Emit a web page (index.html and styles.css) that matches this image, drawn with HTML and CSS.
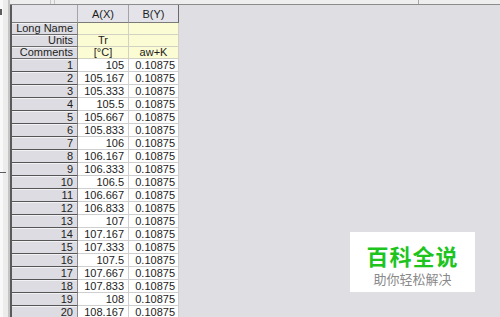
FILE: index.html
```html
<!DOCTYPE html>
<html lang="zh">
<head>
<meta charset="utf-8">
<title>Worksheet</title>
<link rel="stylesheet" href="styles.css">
</head>
<body>
<div class="app">
  <div class="side"><i class="mark m1"></i><i class="mark m2"></i></div>
  <div class="content">
    <div class="topbar"><span class="seg s1"></span><span class="seg s2"></span><span class="seg s3"></span></div>
    <div class="sheet">
      <div class="grid">
        <div class="hd corner"></div><div class="hd">A(X)</div><div class="hd last">B(Y)</div>
        <div class="rh lbl">Long Name</div><div class="yc"></div><div class="yc"></div>
        <div class="rh lbl">Units</div><div class="yc ctr">Tr</div><div class="yc"></div>
        <div class="rh lbl">Comments</div><div class="yc ctr">[°C]</div><div class="yc ctr">aw+K</div>
        <div class="rh">1</div><div class="dc">105</div><div class="dc">0.10875</div>
        <div class="rh">2</div><div class="dc">105.167</div><div class="dc">0.10875</div>
        <div class="rh">3</div><div class="dc">105.333</div><div class="dc">0.10875</div>
        <div class="rh">4</div><div class="dc">105.5</div><div class="dc">0.10875</div>
        <div class="rh">5</div><div class="dc">105.667</div><div class="dc">0.10875</div>
        <div class="rh">6</div><div class="dc">105.833</div><div class="dc">0.10875</div>
        <div class="rh">7</div><div class="dc">106</div><div class="dc">0.10875</div>
        <div class="rh">8</div><div class="dc">106.167</div><div class="dc">0.10875</div>
        <div class="rh">9</div><div class="dc">106.333</div><div class="dc">0.10875</div>
        <div class="rh">10</div><div class="dc">106.5</div><div class="dc">0.10875</div>
        <div class="rh">11</div><div class="dc">106.667</div><div class="dc">0.10875</div>
        <div class="rh">12</div><div class="dc">106.833</div><div class="dc">0.10875</div>
        <div class="rh">13</div><div class="dc">107</div><div class="dc">0.10875</div>
        <div class="rh">14</div><div class="dc">107.167</div><div class="dc">0.10875</div>
        <div class="rh">15</div><div class="dc">107.333</div><div class="dc">0.10875</div>
        <div class="rh">16</div><div class="dc">107.5</div><div class="dc">0.10875</div>
        <div class="rh">17</div><div class="dc">107.667</div><div class="dc">0.10875</div>
        <div class="rh">18</div><div class="dc">107.833</div><div class="dc">0.10875</div>
        <div class="rh">19</div><div class="dc">108</div><div class="dc">0.10875</div>
        <div class="rh">20</div><div class="dc">108.167</div><div class="dc">0.10875</div>
      </div>
    </div>
  </div>
</div>
<div class="watermark">
  <div class="wm-title">百科全说</div>
  <div class="wm-sub">助你轻松解决</div>
</div>
</body>
</html>
```

FILE: styles.css
```css
html, body {
  margin: 0;
  padding: 0;
}
body {
  width: 500px;
  height: 317px;
  overflow: hidden;
  background: #dfdee3;
  font-family: "Liberation Sans", Arial, sans-serif;
  font-size: 11px;
  color: #1c1c1c;
  position: relative;
}
.app {
  display: flex;
  height: 317px;
}
.side {
  width: 10px;
  flex: none;
  display: flex;
  flex-direction: column;
  background: linear-gradient(to right, #f9f9f9 0 3px, #ececec 3px 8px, #c4c4c4 8px 10px);
}
.mark {
  display: block;
  background: #5c5c5c;
}
.m1 {
  width: 2px;
  height: 6px;
  margin-top: 9px;
}
.m2 {
  width: 6px;
  height: 1px;
  margin-top: 157px;
}
.content {
  flex: 1;
  display: flex;
  flex-direction: column;
}
.topbar {
  height: 4px;
  background: #eeeeee;
  border-bottom: 1px solid #8c8c8c;
  display: flex;
}
.seg {
  display: block;
  height: 4px;
}
.s1 { width: 40px; border-right: 1px solid #c8c8c8; }
.s2 { width: 3px; border-right: 1px solid #c8c8c8; }
.s3 { width: 363px; border-right: 1px solid #a8a8a8; }
.sheet {
  flex: 1;
  display: flex;
}
.grid {
  display: grid;
  grid-template-columns: 66px 51px 50px;
  grid-template-rows: 18px 12px 12px 12px repeat(20, 13px);
  border-left: 2px solid #5a5a5a;
  align-self: flex-start;
}
.grid > div {
  box-sizing: border-box;
  white-space: nowrap;
  overflow: hidden;
  display: flex;
  align-items: center;
  justify-content: flex-end;
  padding-right: 4px;
  line-height: 1;
}
.hd {
  background: #e3e3e9;
  border-right: 1px solid #a4a4a8;
  border-bottom: 1px solid #7a7a7a;
  justify-content: center !important;
  padding-right: 0 !important;
  padding-top: 1px;
}
.hd.last {
  border-right: 1px solid #6a6a6a;
}
.rh {
  background: #dcdce2;
  border-right: 1px solid #8a8a8e;
  border-bottom: 1px solid #555;
  box-shadow: inset 0 1px 0 #f2f2f4;
}
.rh.lbl {
  border-bottom: 1px solid #6a6a6a;
}
.yc {
  background: #fbfbd4;
  border-right: 1px solid #d2d2c4;
  border-bottom: 1px solid #d2d2c4;
}
.yc.ctr {
  justify-content: center !important;
  padding-right: 0 !important;
}
.dc {
  background: #ffffff;
  border-right: 1px solid #cfcfcf;
  border-bottom: 1px solid #cfcfcf;
}
.grid > div:nth-child(3n) {
  padding-right: 3px;
}
.watermark {
  position: absolute;
  left: 350px;
  top: 232px;
  width: 125px;
  height: 60px;
  background: #ffffff;
  display: flex;
  flex-direction: column;
  align-items: center;
  font-family: "Noto Sans CJK SC", sans-serif;
}
.wm-title {
  margin-top: 12px;
  font-size: 22px;
  font-weight: 700;
  line-height: 22px;
  color: #1ec41e;
  letter-spacing: 1px;
}
.wm-sub {
  margin-top: 6px;
  font-size: 13px;
  line-height: 14px;
  color: #8a8a8a;
}
```
